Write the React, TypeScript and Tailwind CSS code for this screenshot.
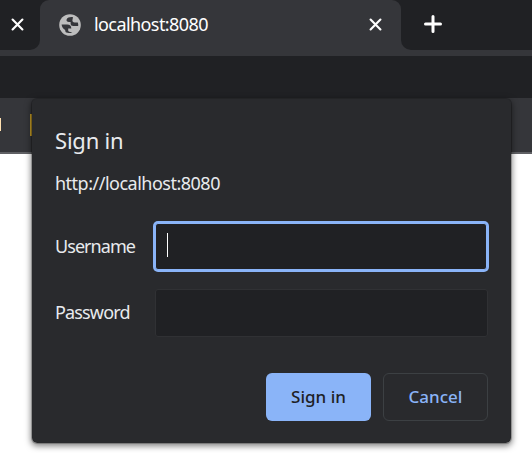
import React from "react";

function Cross({ className }: { className?: string }) {
  return (
    <svg viewBox="0 0 14 14" className={className} stroke="#fff" strokeWidth="2.3" strokeLinecap="round">
      <path d="M1.7 1.7 12.3 12.3M12.3 1.7 1.7 12.3" />
    </svg>
  );
}

function Globe() {
  return (
    <svg viewBox="0 0 22 22" className="size-[22px]">
      <circle cx="11" cy="11" r="10.8" fill="#bdbdbd" />
      <g fill="#35363a">
        <path d="M14 3.200C11 2.800 8.500 3.600 7.600 5.400 7.100 7 8.200 7.900 10 7.900h1.600v1.500c0 1.700 1 2.500 2.700 2.500h4.900c.2-1.300 0-2.400-.4-3.500h-3.200c-1.500 0-2.200-.7-2.200-2.100z" />
        <path d="M2.600 10.600h5.600c2.700 0 4.100 1.300 4.100 3.800H9.200v1.800c0 1.100.8 1.700 2 1.700h2.200c-1.900 1.300-4.100 1.500-6 .7-.9-.7-1.200-1.500-1.200-2.700-2-.9-3.400-2.700-3.600-5.300z" />
      </g>
    </svg>
  );
}

function TabStrip() {
  return (
    <div className="flex h-14 bg-[#35363a]">
      <div className="w-10 bg-[#35363a]">
        <div className="h-[50px] w-10 rounded-br-[10px] bg-[#202124] pl-[11px] pt-[18px]">
          <Cross className="size-[13px]" />
        </div>
      </div>
      <div className="h-[50px] w-[361px] bg-[#202124]">
        <div className="flex h-[49px] items-center rounded-t-[9px] bg-[#35363a] pl-[19px] pr-[19px]">
          <Globe />
          <span className="-mt-px ml-[13px] text-[18px] leading-6 tracking-[-0.58px] text-white">localhost:8080</span>
          <Cross className="ml-auto size-[13px]" />
        </div>
        <div className="h-px bg-[#35363a]" />
      </div>
      <div className="h-[50px] flex-1 rounded-bl-[10px] bg-[#202124] pl-[23px] pt-[15px]">
        <svg viewBox="0 0 18 18" className="size-[18px]" stroke="#fff" strokeWidth="3" strokeLinecap="round">
          <path d="M9 1.5v15M1.5 9h15" />
        </svg>
      </div>
    </div>
  );
}

function SignInDialog() {
  return (
    <div className="absolute left-[31px] top-[98px] h-[346px] w-[481px] rounded-[6px] border border-black/20 bg-[#292a2d] bg-clip-padding px-[23px] text-[#e8eaed] shadow-[0_2px_6px_rgba(0,0,0,0.5)]">
      <h1 className="mt-[26px] text-[22px] leading-[30px] tracking-[-0.2px]">Sign in</h1>
      <p className="mt-4 text-[18px] leading-6 tracking-[-0.5px]">http://localhost:8080</p>
      <div className="mt-7 grid grid-cols-[100px_333px] gap-y-[19px] text-[18px] leading-6">
        <label className="self-center pb-0.5 tracking-[-0.95px]">Username</label>
        <div className="flex h-[47px] w-[332px] items-center rounded-[3px] border border-[#8ab4f8] bg-[#202124] pb-[3px] pl-[11px] ring-2 ring-[#8ab4f8]">
          <div className="h-6 w-px bg-white" />
        </div>
        <label className="self-center pb-[3px] tracking-[-0.85px]">Password</label>
        <div className="h-12 rounded-[3px] border border-[#303134] bg-[#202124]" />
      </div>
      <div className="mt-9 flex gap-3 pl-[211px] text-[17px] font-medium">
        <button className="h-12 w-[105px] rounded-[6px] bg-[#8ab4f8] text-[#202124]">Sign in</button>
        <button className="h-12 w-[105px] rounded-[6px] border border-[#3c4043] text-[#8ab4f8]">Cancel</button>
      </div>
    </div>
  );
}

export default function App() {
  return (
    <div className="relative h-[453px] w-[532px] overflow-hidden bg-white font-['Noto_Sans',sans-serif]">
      <TabStrip />
      <div className="h-[42px] bg-[#202124]" />
      <div className="flex h-14 items-start border-b-2 border-[#5f6064] bg-[#35363a]">
        <div className="mt-5 h-[13px] w-px bg-[#ffe0b0]" />
        <div className="ml-[29px] mt-4 h-[22px] w-0.5 bg-[#c79e28]" />
      </div>
      <SignInDialog />
    </div>
  );
}
